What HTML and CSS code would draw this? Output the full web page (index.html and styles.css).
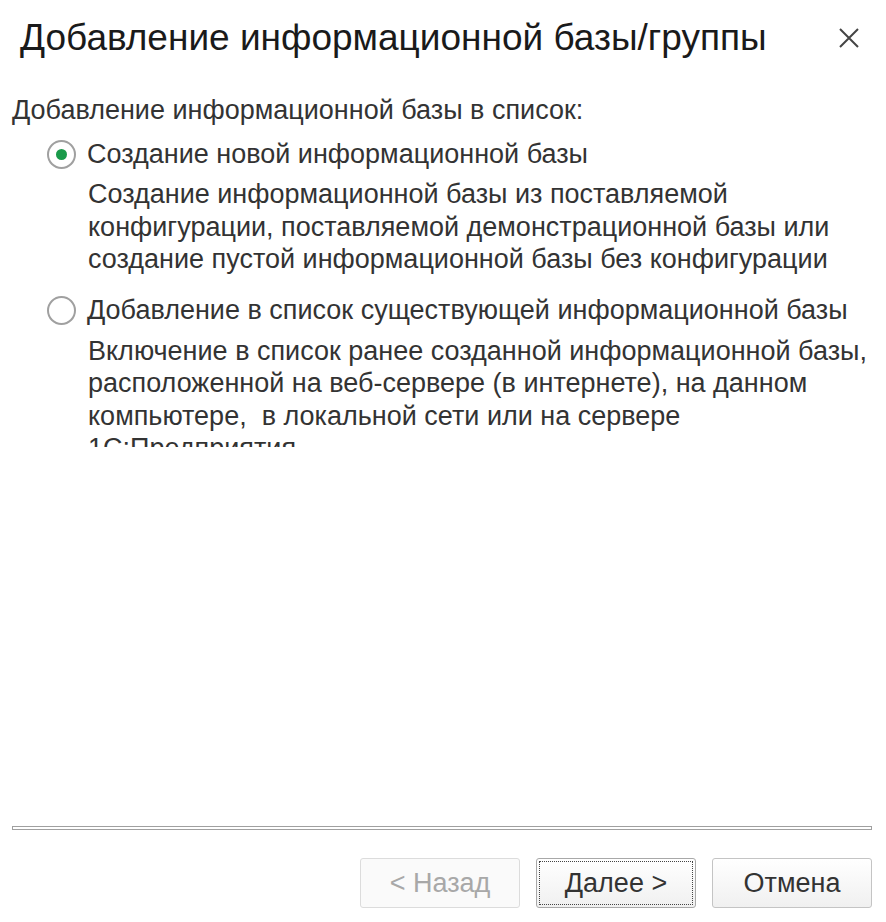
FILE: index.html
```html
<!DOCTYPE html>
<html lang="ru">
<head>
    <meta charset="UTF-8">
    <title>Добавление информационной базы/группы</title>
    <link rel="stylesheet" href="styles.css">
</head>
<body>

<div class="dialog">
    <div class="header">
        <h1>Добавление информационной базы/группы</h1>
        <button class="close" title="Закрыть">
            <svg width="22" height="22" viewBox="0 0 22 22">
                <path d="M2 2 L20 20 M20 2 L2 20" stroke="#444" stroke-width="2" fill="none"/>
            </svg>
        </button>
    </div>

    <div class="content">
        <p class="caption">Добавление информационной базы в список:</p>

        <div class="options">
            <label class="option">
                <span class="radio checked"></span>
                <span class="option-title">Создание новой информационной базы</span>
            </label>
            <p class="option-desc">Создание информационной базы из поставляемой конфигурации, поставляемой демонстрационной базы или создание пустой информационной базы без конфигурации</p>

            <label class="option">
                <span class="radio"></span>
                <span class="option-title">Добавление в список существующей информационной базы</span>
            </label>
            <p class="option-desc">Включение в список ранее созданной информационной базы, расположенной на веб-сервере (в интернете), на данном компьютере,&nbsp; в локальной сети или на сервере 1С:Предприятия</p>
        </div>
    </div>

    <div class="separator"></div>

    <div class="buttons">
        <button class="btn" disabled>&lt; Назад</button>
        <button class="btn default"><span class="focus">Далее &gt;</span></button>
        <button class="btn">Отмена</button>
    </div>
</div>

</body>
</html>
```

FILE: styles.css
```css
* {
    margin: 0;
    padding: 0;
    box-sizing: border-box;
}

body {
    font-family: "Liberation Sans", Arial, sans-serif;
    background: #fff;
    color: #333;
}

.dialog {
    width: 886px;
    height: 922px;
    display: flex;
    flex-direction: column;
}

.header {
    display: flex;
    align-items: center;
    justify-content: space-between;
    height: 78px;
    padding: 0 26px 2px 20px;
}

h1 {
    font-weight: 400;
    font-size: 37px;
    color: #1a1a1a;
    white-space: nowrap;
}

.close {
    border: none;
    background: none;
    width: 22px;
    height: 22px;
    display: flex;
}

.content {
    flex: 1;
    padding: 16px 10px 0 12px;
}

.caption {
    font-size: 27px;
    line-height: 32px;
}

.options {
    height: 321px;
    overflow: hidden;
    padding: 12px 0 0 35px;
}

.option {
    display: flex;
    align-items: center;
    gap: 11px;
    height: 32px;
    font-size: 27px;
    white-space: nowrap;
}

.radio {
    flex: none;
    width: 29px;
    height: 29px;
    border: 2px solid #a0a0a0;
    border-radius: 50%;
    background: #fff;
    display: flex;
    align-items: center;
    justify-content: center;
}

.radio.checked::after {
    content: "";
    width: 11px;
    height: 11px;
    border-radius: 50%;
    background: #1a9a4a;
}

.option-desc {
    font-size: 27px;
    line-height: 32.5px;
    padding: 8px 0 19px 41px;
}

.separator {
    margin: 0 14px 0 12px;
    height: 4px;
    border: 1px solid #a0a0a0;
}

.buttons {
    display: flex;
    justify-content: flex-end;
    gap: 16px;
    padding: 28px 14px 14px 0;
}

.btn {
    width: 160px;
    height: 50px;
    font-family: inherit;
    font-size: 27px;
    color: #333;
    border: 1px solid #c4c4c4;
    border-radius: 3px;
    background: linear-gradient(#fff, #f0f0f0);
    display: flex;
    align-items: center;
    justify-content: center;
}

.btn:disabled {
    color: #a8a8a8;
    border-color: #dcdcdc;
    background: #fafafa;
}

.btn.default {
    border-color: #a8a8a8;
    padding: 2px;
}

.focus {
    width: 100%;
    height: 100%;
    border: 1px dotted #444;
    display: flex;
    align-items: center;
    justify-content: center;
}
```
